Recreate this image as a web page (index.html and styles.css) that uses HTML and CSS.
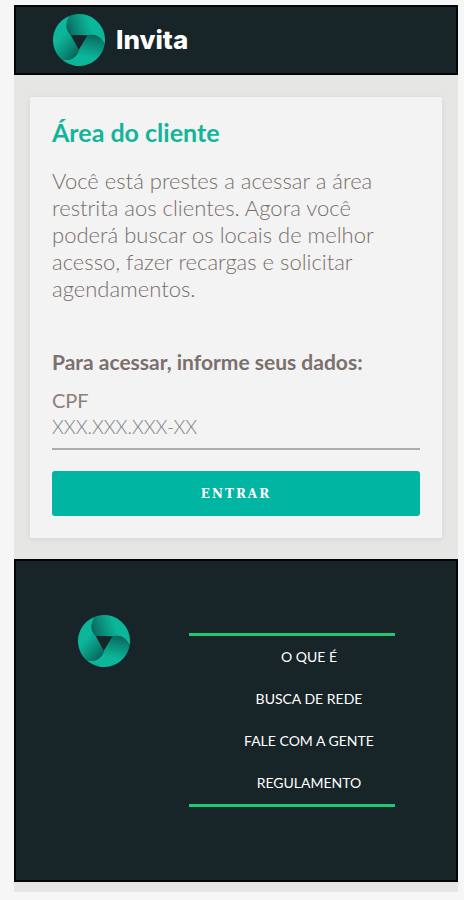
FILE: index.html
```html
<!DOCTYPE html>
<html lang="pt-BR">
  <head>
    <meta charset="UTF-8" />
    <meta name="viewport" content="width=device-width, initial-scale=1.0" />
    <title>Invita - Área do cliente</title>
    <link rel="stylesheet" href="styles.css">
  </head>
  <body>
    <svg class="sprite" aria-hidden="true">
      <defs>
        <linearGradient id="blade-fill" gradientUnits="userSpaceOnUse" x1="30" y1="36" x2="70" y2="22">
          <stop offset="0" stop-color="#07665a" />
          <stop offset="0.4" stop-color="#0a8a78" />
          <stop offset="1" stop-color="#0cb69a" />
        </linearGradient>
        <path id="blade" fill="url(#blade-fill)" d="M33.5 6C26 18 24 30 35 41L65.3 41.5C80.3 37.5 89.7 45.2 96.4 57.7A47 47 0 0 0 33.5 6Z" />
      </defs>
      <symbol id="logo" viewBox="3 3 94 94">
        <use href="#blade" />
        <use href="#blade" transform="rotate(120 50 50)" />
        <use href="#blade" transform="rotate(240 50 50)" />
      </symbol>
    </svg>

    <div class="page">
      <header class="header">
        <a href="#" class="brand">
          <svg class="logo" aria-hidden="true"><use href="#logo" /></svg>
          <span>Invita</span>
        </a>
      </header>

      <main class="main">
        <section class="card">
          <h1 class="title">Área do cliente</h1>
          <p class="text">
            Você está prestes a acessar a área restrita aos clientes. Agora você
            poderá buscar os locais de melhor acesso, fazer recargas e solicitar
            agendamentos.
          </p>
          <form class="form">
            <h2 class="subtitle">Para acessar, informe seus dados:</h2>
            <label class="label" for="cpf">CPF</label>
            <input class="input" type="text" id="cpf" name="cpf" placeholder="XXX.XXX.XXX-XX" />
            <button class="button" type="submit">ENTRAR</button>
          </form>
        </section>
      </main>

      <footer class="footer">
        <svg class="logo" role="img" aria-label="Invita"><use href="#logo" /></svg>
        <nav class="nav">
          <ul class="menu">
            <li><a href="#">O QUE É</a></li>
            <li><a href="#">BUSCA DE REDE</a></li>
            <li><a href="#">FALE COM A GENTE</a></li>
            <li><a href="#">REGULAMENTO</a></li>
          </ul>
        </nav>
      </footer>
    </div>
  </body>
</html>
```

FILE: styles.css
```css
* {
  box-sizing: border-box;
}
body {
  margin: 0;
  background-color: #f6f6f6;
  color: #786e6a;
  font-family: Lato, "Open Sans", sans-serif;
}
.sprite {
  position: absolute;
  width: 0;
  height: 0;
}
.page {
  margin: 5px 6px 8px 14px;
  padding-bottom: 10px;
  background-color: #e6e6e5;
}
.logo {
  flex: none;
  width: 52px;
  height: 52px;
}
.header {
  padding: 8px 37px;
  border: 2px solid #020608;
  background-color: #172428;
}
.brand {
  display: flex;
  align-items: center;
  gap: 11px;
  height: 50px;
  color: #fff;
  font-family: Inter, sans-serif;
  font-size: 26px;
  font-weight: 800;
  line-height: 30px;
  text-decoration: none;
}
.main {
  padding: 22px 16px 21px;
}
.card {
  padding: 20px 22px 22px;
  background-color: #f3f3f3;
  box-shadow: 0 1px 6px #d4d4d4;
}
.title {
  margin: 0 0 20px;
  color: #12b59b;
  font-size: 25px;
  line-height: 30px;
}
.text {
  margin: 0;
  font-size: 22px;
  font-weight: 300;
  line-height: 27px;
}
.subtitle {
  margin: 46px 0 12px;
  color: #7b706c;
  font-size: 21px;
  line-height: 27px;
}
.label {
  display: block;
  color: #8a807c;
  font-size: 20px;
  line-height: 27px;
}
.input {
  display: block;
  width: 100%;
  height: 36px;
  margin-bottom: 21px;
  padding: 0 0 9px;
  border: 0;
  border-bottom: 2px solid #adadad;
  background: none;
  color: #786e6a;
  font: 300 19px Lato, "Open Sans", sans-serif;
}
.input::placeholder {
  color: #7c8488;
}
.button {
  display: block;
  width: 100%;
  height: 45px;
  border: 0;
  border-radius: 3px;
  background-color: #00b5a1;
  color: #fff;
  font: bold 12px "DejaVu Serif", serif;
  letter-spacing: 2px;
  cursor: pointer;
}
.footer {
  display: flex;
  align-items: flex-start;
  justify-content: space-between;
  padding: 54px 61px 73px 62px;
  border: 2px solid #020608;
  background-color: #172428;
}
.nav {
  width: 65%;
  margin-top: 18px;
}
.menu {
  margin: 0;
  padding: 0 0 0 34px;
  border-top: 3px solid #1dc96c;
  border-bottom: 3px solid #1dc96c;
  list-style: none;
  text-align: center;
}
.menu a {
  display: block;
  color: #fff;
  font-size: 14px;
  line-height: 42px;
  text-decoration: none;
}
```
